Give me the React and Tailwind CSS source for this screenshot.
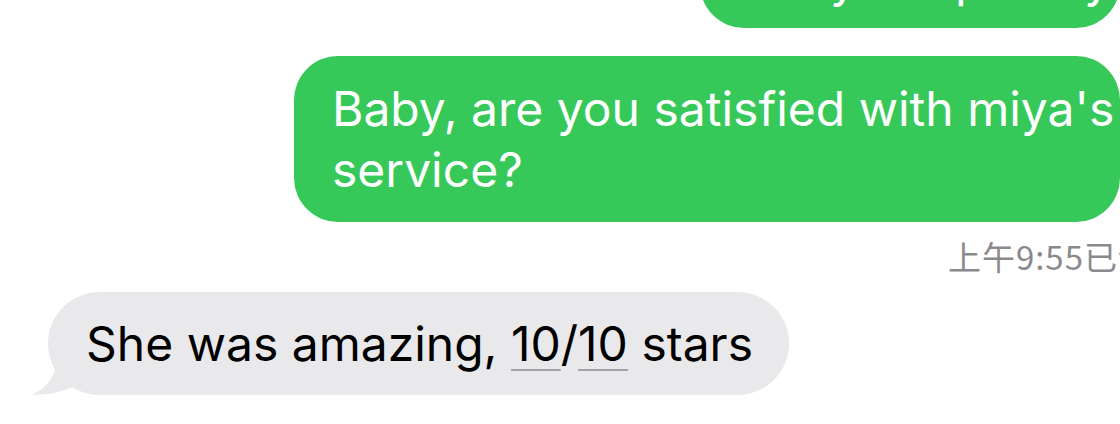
import React from 'react';

// iMessage thread, cropped
function Tail() {
  return (
    <svg className="absolute left-[-16px] bottom-0" width="60" height="46" viewBox="0 0 60 46">
      <path d="M26 0 C26 22 20 36 0 46 C18 46 34 42 44 36 L60 36 L60 0 Z" fill="#e9e9eb" />
    </svg>
  );
}

export default function App() {
  return (
    <div className="w-[1120px] h-[424px] overflow-hidden bg-white font-['Inter','Noto_Sans_CJK_SC',sans-serif]">
      {/* older outgoing message, mostly scrolled away */}
      <div className="flex justify-end -mt-[73px]">
        <div className="w-[420px] bg-[#36c95a] text-white text-[48px] leading-[61px] rounded-[44px] pl-[38px] pt-[22px] pb-[18px] whitespace-nowrap overflow-hidden">
          Are you up early today?
        </div>
      </div>

      <div className="flex justify-end mt-[28px]">
        <div className="w-[826px] bg-[#36c95a] text-white text-[48px] leading-[61px] rounded-[44px] pl-[38px] py-[22px] whitespace-nowrap">
          Baby, are you satisfied with miya's
          <br />
          service?
        </div>
      </div>

      <div className="flex justify-end mt-[14px] mr-[-32px]">
        <span className="text-[33px] leading-[40px] tracking-[1px] text-[#8a8a8e] font-['Noto_Sans_CJK_SC',sans-serif]">上午9:55已读</span>
      </div>

      <div className="flex mt-[16px] pl-[48px]">
        <div className="relative bg-[#e9e9eb] text-black text-[48px] leading-[61px] rounded-[52px] pl-[38px] pr-[36px] py-[21px] whitespace-nowrap">
          <Tail />
          <span className="relative">
            She was amazing,{' '}
            <span className="underline decoration-[#a3a3a7] decoration-2 underline-offset-[8px]">10</span>/
            <span className="underline decoration-[#a3a3a7] decoration-2 underline-offset-[8px]">10</span> stars
          </span>
        </div>
      </div>
    </div>
  );
}
